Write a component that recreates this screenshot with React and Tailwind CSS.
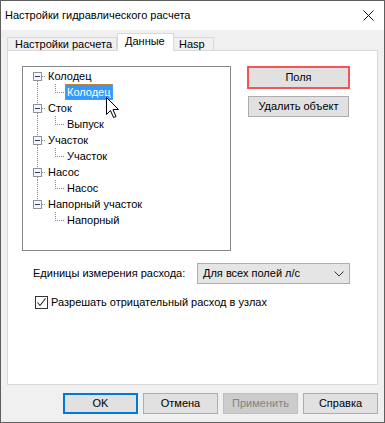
import React from 'react';

const tree = [
  { label: 'Колодец', child: 'Колодец', selected: true },
  { label: 'Сток', child: 'Выпуск' },
  { label: 'Участок', child: 'Участок' },
  { label: 'Насос', child: 'Насос' },
  { label: 'Напорный участок', child: 'Напорный' },
];

function RootLines({ first, last }) {
  return (
    <svg width="23" height="16" className="shrink-0" shapeRendering="crispEdges">
      {!first && <line x1="14.5" y1="0" x2="14.5" y2="4" stroke="#8a8a8a" strokeDasharray="1 1" />}
      {!last && <line x1="14.5" y1="13" x2="14.5" y2="16" stroke="#8a8a8a" strokeDasharray="1 1" />}
      <rect x="10.5" y="4.5" width="8" height="8" fill="#f7f7f7" stroke="#919191" />
      <line x1="12" y1="8.5" x2="17" y2="8.5" stroke="#1f3c88" />
      <line x1="19" y1="8.5" x2="23" y2="8.5" stroke="#8a8a8a" strokeDasharray="1 1" />
    </svg>
  );
}

function ChildLines({ last }) {
  return (
    <svg width="42" height="16" className="shrink-0" shapeRendering="crispEdges">
      {!last && <line x1="14.5" y1="0" x2="14.5" y2="16" stroke="#8a8a8a" strokeDasharray="1 1" />}
      <line x1="32.5" y1="0" x2="32.5" y2="8" stroke="#8a8a8a" strokeDasharray="1 1" />
      <line x1="32" y1="8.5" x2="42" y2="8.5" stroke="#8a8a8a" strokeDasharray="1 1" />
    </svg>
  );
}

function Btn({ children, className = '' }) {
  return (
    <div className={`flex items-center justify-center h-[21px] bg-[#e1e1e1] border border-[#adadad] ${className}`}>
      {children}
    </div>
  );
}

export default function App() {
  return (
    <div className="w-[385px] h-[423px] flex flex-col border border-[#5f5f5f] bg-[#f0f0f0] text-[11px] text-black font-['Liberation_Sans',Arial,sans-serif] leading-none whitespace-nowrap select-none">
      {/* Title bar */}
      <div className="h-[29px] bg-white flex items-center justify-between pl-[4px] pr-[10px]">
        <span className="text-[11px]">Настройки гидравлического расчета</span>
        <svg width="11" height="11" viewBox="0 0 11 11">
          <path d="M0.5 0.5 L10.5 10.5 M10.5 0.5 L0.5 10.5" stroke="#111" strokeWidth="1" />
        </svg>
      </div>

      <div className="flex flex-col px-[6px] pt-[3px]">
        {/* Tabs */}
        <div className="flex items-end h-[17px]">
          <div className="w-[110px] h-[13px] border border-b-0 border-[#d9d9d9] flex items-center pl-[7px] pt-[1px]">
            Настройки расчета
          </div>
          <div className="relative z-10 w-[57px] h-[18px] mb-[-1px] bg-white border border-b-0 border-[#d9d9d9] flex items-center pl-[7px] pb-[2px]">
            Данные
          </div>
          <div className="w-[40px] h-[13px] border border-b-0 border-l-0 border-[#d9d9d9] flex items-center pl-[5px] pt-[1px]">
            Hasp
          </div>
        </div>

        {/* Panel */}
        <div className="h-[335px] bg-white border border-[#d9d9d9] flex flex-col pl-[14px] pt-[15px]">
          <div className="flex">
            <div className="relative w-[209px] h-[185px] border border-[#828790] bg-white pt-[1px]">
              {tree.map((n, i) => {
                const last = i === tree.length - 1;
                return (
                  <React.Fragment key={i}>
                    <div className="flex items-center h-[16px]">
                      <RootLines first={i === 0} last={last} />
                      <span className="px-[2px]">{n.label}</span>
                    </div>
                    <div className="flex items-center h-[16px]">
                      <ChildLines last={last} />
                      {n.selected ? (
                        <span className="h-[16px] flex items-center px-[1px] bg-[#3399ff] text-white border border-dotted border-[#c98a3a]">
                          {n.child}
                        </span>
                      ) : (
                        <span className="px-[2px]">{n.child}</span>
                      )}
                    </div>
                  </React.Fragment>
                );
              })}
              {/* mouse cursor */}
              <svg className="absolute left-[83px] top-[30px]" width="14" height="22" viewBox="0 0 14 22">
                <path d="M0.5 0.5 L0.5 17.5 L4.5 13.5 L7.5 20.5 L10 19.5 L7 12.5 L12.5 12.5 Z" fill="white" stroke="black" strokeWidth="1" strokeLinejoin="miter" />
              </svg>
            </div>

            <div className="flex flex-col ml-[16px]">
              <div className="w-[103px] h-[23px] border-2 border-[#f25555] bg-[#e1e1e1] flex items-center justify-center">
                Поля
              </div>
              <Btn className="w-[101px] ml-[1px] mt-[7px]">Удалить объект</Btn>
            </div>
          </div>

          <div className="flex items-center mt-[12px] pl-[11px]">
            <span className="w-[164px]">Единицы измерения расхода:</span>
            <div className="w-[153px] h-[21px] bg-[#e5e5e5] border border-[#adadad] flex items-center justify-between pl-[5px] pr-[5px]">
              <span>Для всех полей л/с</span>
              <svg width="10" height="6" viewBox="0 0 10 6">
                <path d="M0.5 0.5 L5 5 L9.5 0.5" fill="none" stroke="#333" strokeWidth="1" />
              </svg>
            </div>
          </div>

          <div className="flex items-center mt-[12px] pl-[13px]">
            <div className="w-[13px] h-[13px] border border-[#333] bg-white flex items-center justify-center">
              <svg width="11" height="11" viewBox="0 0 11 11">
                <path d="M1.5 5.5 L4 8.5 L9.5 1.5" fill="none" stroke="#222" strokeWidth="1.1" />
              </svg>
            </div>
            <span className="ml-[3px]">Разрешать отрицательный расход в узлах</span>
          </div>
        </div>

        {/* Bottom buttons */}
        <div className="flex justify-end gap-[5px] mt-[8px]">
          <div className="w-[75px] h-[21px] bg-[#e1e1e1] border-2 border-[#0078d7] flex items-center justify-center">OK</div>
          <Btn className="w-[75px]">Отмена</Btn>
          <div className="w-[75px] h-[21px] bg-[#cccccc] border border-[#bfbfbf] text-[#838383] flex items-center justify-center">Применить</div>
          <Btn className="w-[75px]">Справка</Btn>
        </div>
      </div>
    </div>
  );
}
